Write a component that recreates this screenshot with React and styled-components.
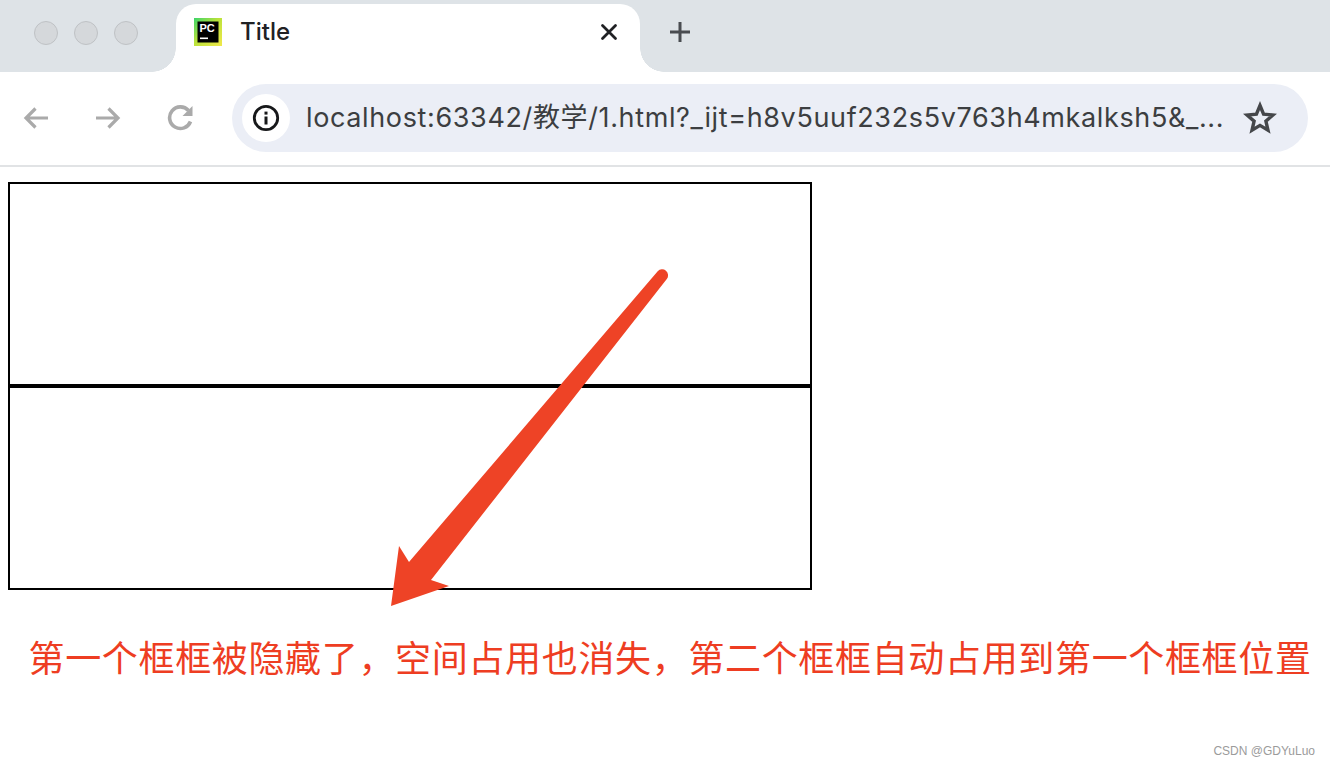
import React from "react";
import styled, { createGlobalStyle } from "styled-components";

const Global = createGlobalStyle`
  html, body { margin: 0; padding: 0; background: #fff; }
  body { font-family: "Liberation Sans", "Noto Sans CJK SC", sans-serif; }
`;

const Page = styled.div`
  position: relative;
  width: 1330px;
  height: 766px;
  overflow: hidden;
  background: #fff;
`;

const TabStrip = styled.div`
  height: 72px;
  background: #dee3e7;
  display: flex;
  align-items: flex-end;
  padding-left: 34px;
`;

const Lights = styled.div`
  display: flex;
  gap: 16px;
  align-self: flex-start;
  margin-top: 21px;
  width: 142px;
`;

const Light = styled.span`
  width: 24px;
  height: 24px;
  box-sizing: border-box;
  border-radius: 50%;
  background: #d5d8db;
  border: 1px solid #bfc2c5;
`;

const Tab = styled.div`
  position: relative;
  width: 464px;
  height: 68px;
  background: #fff;
  border-radius: 20px 20px 0 0;
  display: flex;
  align-items: flex-start;
  padding: 14px 22px 0 18px;
  box-sizing: border-box;
  &::before, &::after {
    content: "";
    position: absolute;
    bottom: 0;
    width: 24px;
    height: 24px;
  }
  &::before {
    left: -24px;
    background: radial-gradient(circle at 0 0, transparent 23.5px, #fff 24px);
  }
  &::after {
    right: -24px;
    background: radial-gradient(circle at 100% 0, transparent 23.5px, #fff 24px);
  }
`;

const TabTitle = styled.span`
  flex: 1;
  margin-left: 18px;
  font: 500 24px/28px Inter, "Liberation Sans", sans-serif;
  color: #202124;
`;

const TabClose = styled.svg`
  width: 18px;
  height: 18px;
  margin-top: 5px;
`;

const NewTab = styled.svg`
  width: 22px;
  height: 22px;
  margin: 0 0 29px 29px;
  align-self: flex-end;
`;

const Toolbar = styled.div`
  height: 95px;
  box-sizing: border-box;
  border-bottom: 2px solid #e1e3e5;
  display: flex;
  align-items: flex-start;
  padding: 12px 22px 0 22px;
  background: #fff;
`;

const NavIcon = styled.svg`
  width: 28px;
  height: 28px;
  margin-top: 20px;
  margin-right: ${(p) => p.$gap}px;
`;

const Omnibox = styled.div`
  width: 1076px;
  height: 68px;
  margin-left: -7px;
  border-radius: 34px;
  background: #ebeef6;
  display: flex;
  align-items: center;
  padding: 0 31px 0 10px;
  box-sizing: border-box;
`;

const InfoChip = styled.div`
  width: 48px;
  height: 48px;
  border-radius: 50%;
  background: #fff;
  display: flex;
  align-items: center;
  justify-content: center;
  flex: none;
`;

const Url = styled.span`
  flex: 1;
  margin-left: 16px;
  font: 400 27px/34px Inter, "Noto Sans CJK SC", sans-serif;
  letter-spacing: 0.63px;
  color: #3c3e41;
  white-space: nowrap;
`;

const Content = styled.main`
  padding: 15px 8px 0;
`;

const Frame = styled.div`
  width: 800px;
  height: 200px;
  border: 2px solid #000;
`;

const Caption = styled.p`
  margin: 42px 0 0 20.5px;
  font: 400 36px/48px "Noto Sans CJK SC", sans-serif;
  letter-spacing: 0.66px;
  color: #ee3d22;
  white-space: nowrap;
`;

const ArrowLayer = styled.svg`
  position: absolute;
  left: 0;
  top: 0;
  width: 1330px;
  height: 766px;
  pointer-events: none;
`;

const Watermark = styled.span`
  position: absolute;
  right: 15px;
  bottom: 8px;
  font: 400 12px/14px "Liberation Sans", sans-serif;
  color: #9b9b9b;
`;

const PycharmIcon = () => (
  <svg width="28" height="28" viewBox="0 0 28 28">
    <defs>
      <linearGradient id="pc-edge" x1="0" y1="0" x2="1" y2="1">
        <stop offset="0" stopColor="#3bd46a" />
        <stop offset="0.45" stopColor="#b9e23a" />
        <stop offset="1" stopColor="#f1e84a" />
      </linearGradient>
    </defs>
    <rect width="28" height="28" fill="url(#pc-edge)" />
    <rect x="3.5" y="3.5" width="21" height="21" fill="#000" />
    <text x="5.5" y="14" fontFamily="Liberation Sans, sans-serif" fontWeight="700" fontSize="11" fill="#fff">PC</text>
    <rect x="6" y="19.5" width="8" height="1.6" fill="#fff" />
  </svg>
);

export default function App() {
  return (
    <Page>
      <Global />
      <TabStrip>
        <Lights>
          <Light />
          <Light />
          <Light />
        </Lights>
        <Tab>
          <PycharmIcon />
          <TabTitle>Title</TabTitle>
          <TabClose viewBox="0 0 18 18">
            <path d="M2.5 2.5 L15.5 15.5 M15.5 2.5 L2.5 15.5" stroke="#202124" strokeWidth="2.8" strokeLinecap="round" />
          </TabClose>
        </Tab>
        <NewTab viewBox="0 0 22 22">
          <path d="M11 1 V21 M1 11 H21" stroke="#494c50" strokeWidth="3" />
        </NewTab>
      </TabStrip>
      <Toolbar>
        <NavIcon viewBox="0 0 28 28" $gap={44}>
          <path d="M26 14 H4 M13.5 4.5 L4 14 L13.5 23.5" fill="none" stroke="#aaaaaa" strokeWidth="3.2" />
        </NavIcon>
        <NavIcon viewBox="0 0 28 28" $gap={45}>
          <path d="M2 14 H24 M14.5 4.5 L24 14 L14.5 23.5" fill="none" stroke="#aaaaaa" strokeWidth="3.2" />
        </NavIcon>
        <NavIcon viewBox="0 0 28 28" $gap={44}>
          <path d="M23.5 17.5 A10.8 10.8 0 1 1 21.5 6.5" fill="none" stroke="#aaaaaa" strokeWidth="3.6" />
          <path d="M25.5 2 V12 H15.5 Z" fill="#aaaaaa" />
        </NavIcon>
        <Omnibox>
          <InfoChip>
            <svg width="28" height="28" viewBox="0 0 28 28">
              <circle cx="14" cy="14" r="11.7" fill="none" stroke="#17181a" strokeWidth="2.8" />
              <rect x="12.5" y="12.5" width="3" height="8" fill="#17181a" />
              <rect x="12.5" y="7.6" width="3" height="3" fill="#17181a" />
            </svg>
          </InfoChip>
          <Url>localhost:63342/教学/1.html?_ijt=h8v5uuf232s5v763h4mkalksh5&amp;_...</Url>
          <svg width="34" height="34" viewBox="0 0 34 34">
            <path d="M17 4.5 L20.6 13.2 L30 14 L22.9 20.1 L25 29.3 L17 24.4 L9 29.3 L11.1 20.1 L4 14 L13.4 13.2 Z" fill="none" stroke="#45474a" strokeWidth="3.4" />
          </svg>
        </Omnibox>
      </Toolbar>
      <Content>
        <Frame />
        <Frame />
        <Caption>第一个框框被隐藏了，空间占用也消失，第二个框框自动占用到第一个框框位置</Caption>
      </Content>
      <ArrowLayer viewBox="0 0 1330 766">
        <path
          d="M657.7 271.2 A6 6 0 0 1 666.8 279 L431 580 L449 586 L391 606 L399 546 L409 562 Z"
          fill="#ee4326"
        />
      </ArrowLayer>
      <Watermark>CSDN @GDYuLuo</Watermark>
    </Page>
  );
}
